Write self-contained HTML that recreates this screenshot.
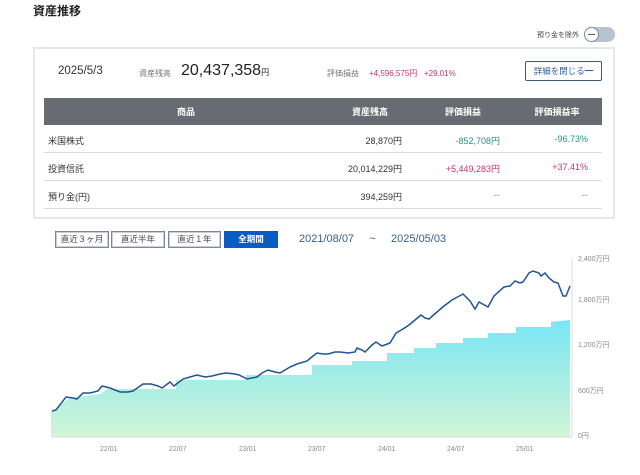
<!DOCTYPE html>
<html><head><meta charset="utf-8"><style>
*{margin:0;padding:0;box-sizing:border-box}
body{width:640px;height:475px;background:#fff;font-family:"Liberation Sans","Noto Sans CJK JP",sans-serif;position:relative;overflow:hidden;color:#333}
.a{position:absolute;white-space:nowrap}
.card{position:absolute;left:33px;top:47px;width:582px;height:172px;border:2px solid #e3e8ee}
.th{position:absolute;left:44px;top:98px;width:558px;height:27px;background:#676b72}
.th span{position:absolute;top:7px;color:#fff;font-size:9px;font-weight:bold;transform:translateX(-50%)}
.row{position:absolute;left:44px;width:558px;height:28px;border-bottom:1px solid #d8dde2;font-size:9px}
.row span{position:absolute;top:9px}
.btn{position:absolute;top:231px;height:17px;border:1px solid #7a8a99;font-size:8.5px;color:#445;text-align:center;line-height:15px;box-shadow:0 0 0 1px #ccd inset}
.pink{color:#c0396b}.green{color:#2f9080}
</style></head><body>
<div class="a" style="left:33px;top:2px;font-size:12px;font-weight:bold;color:#222">資産推移</div>
<div class="a" style="left:537px;top:30px;font-size:7px;color:#444">預り金を除外</div>
<div class="a" style="left:584px;top:27px;width:31px;height:15px;border-radius:8px;background:#b8c2d0"></div>
<div class="a" style="left:584px;top:27px;width:15px;height:15px;border-radius:50%;background:#fff;border:1px solid #7a8aa0"><div style="position:absolute;left:3px;top:6px;width:7px;height:1px;background:#556"></div></div>
<div class="card"></div>
<div class="a" style="left:58px;top:65px;font-size:11.5px;color:#333">2025/5/3</div>
<div class="a" style="left:139px;top:68px;font-size:8px;color:#777">資産残高</div>
<div class="a" style="left:181px;top:62px;font-size:16px;color:#222">20,437,358<span style="font-size:8px">円</span></div>
<div class="a" style="left:327px;top:68px;font-size:8px;color:#777">評価損益</div>
<div class="a pink" style="left:369px;top:68px;font-size:8px">+4,596,575円&nbsp;&nbsp;&nbsp;+29.01%</div>
<div class="a" style="left:525px;top:61px;width:77px;height:20px;border:1px solid #3c5a78;border-radius:2px;font-size:8.5px;color:#2f5f9a;text-align:center;line-height:18px">詳細を閉じる━</div>
<div class="th"><span style="left:142px">商品</span><span style="left:326px">資産残高</span><span style="left:419px">評価損益</span><span style="left:513px">評価損益率</span></div>
<div class="row" style="top:125px"><span style="left:4px">米国株式</span><span style="right:200px">28,870円</span><span class="green" style="right:102px">-852,708円</span><span class="green" style="right:14px">-96.73%</span></div>
<div class="row" style="top:153px"><span style="left:4px">投資信託</span><span style="right:200px">20,014,229円</span><span class="pink" style="right:102px">+5,449,283円</span><span class="pink" style="right:14px">+37.41%</span></div>
<div class="row" style="top:181px"><span style="left:4px">預り金(円)</span><span style="right:200px">394,259円</span><span style="right:102px;color:#888">--</span><span style="right:14px;color:#888">--</span></div>
<div class="btn" style="left:55px;width:54px">直近３ヶ月</div>
<div class="btn" style="left:111px;width:54px">直近半年</div>
<div class="btn" style="left:168px;width:53px">直近１年</div>
<div class="btn" style="left:224px;width:54px;background:#0b5cc0;color:#fff;border-color:#0b5cc0;box-shadow:none;font-weight:bold">全期間</div>
<div class="a" style="left:299px;top:233px;font-size:11px;color:#3a6088">2021/08/07&nbsp;&nbsp;&nbsp;&nbsp;&nbsp;~&nbsp;&nbsp;&nbsp;&nbsp;&nbsp;2025/05/03</div>
<svg class="a" style="left:0;top:0" width="640" height="475">
<defs><linearGradient id="g" x1="0" y1="0" x2="0" y2="1"><stop offset="0" stop-color="#78e6f6"/><stop offset="1" stop-color="#d2f5d6"/></linearGradient></defs>
<path d="M51,412 L60,405 L70,398 L100,394 L107,389 L176,389 L176,380 L246,380 L246,375 L312,375 L312,365 L352,365 L352,361 L387,361 L387,353 L414,353 L414,348 L436,348 L436,343 L463,343 L463,338 L488,338 L488,333 L516,333 L516,327 L551,327 L551,322 L570,320 L570,437 L51,437Z" fill="url(#g)"/>
<line x1="572" y1="258" x2="572" y2="437" stroke="#ddd"/>
<line x1="51" y1="437" x2="572" y2="437" stroke="#ddd"/>
<polyline fill="none" stroke="#1f5590" stroke-width="1.5" points="52,411 56,410 66,397 73,398 77,399 83,393 90,393 98,391 102,386 110,388 120,392 128,392 133,391 143,384 151,384 158,386 162,388 170,382 174,386 183,379 190,377 197,375 205,377 212,376 220,374 226,373 235,374 239,375 247,379 257,377 262,373 268,370 275,372 280,373 290,367 297,364 307,361 313,356 317,353 323,354 328,354 335,352 340,352 348,353 355,352 357,348 362,350 365,352 372,345 376,342 382,346 390,343 396,333 403,329 409,325 415,320 421,315 425,318 429,319 437,312 444,306 452,300 463,294 470,301 475,309 479,302 488,307 494,296 504,287 510,286 515,281 520,283 523,282 529,273 533,271 539,273 541,276 545,273 549,278 554,282 558,283 563,296 566,296 570,286"/>
<g font-size="7" fill="#888" font-family="Liberation Sans,sans-serif">
<text x="578" y="261">2,400万円</text><text x="578" y="302">1,800万円</text><text x="578" y="347">1,200万円</text><text x="578" y="393">600万円</text><text x="578" y="438">0円</text>
<text x="100" y="451">22/01</text><text x="169" y="451">22/07</text><text x="239" y="451">23/01</text><text x="308" y="451">23/07</text><text x="378" y="451">24/01</text><text x="447" y="451">24/07</text><text x="516" y="451">25/01</text>
</g></svg>
</body></html>
